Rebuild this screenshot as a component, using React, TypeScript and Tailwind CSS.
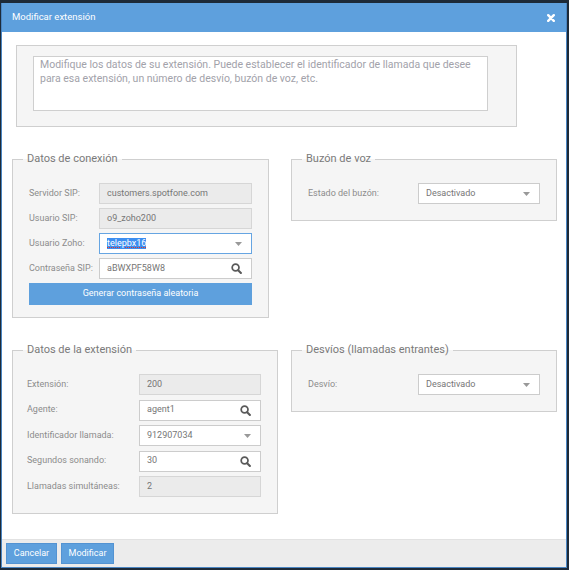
import React from 'react';

type Kind = 'readonly' | 'select' | 'search' | 'focus' | 'text';

// Small grey triangle used by the select boxes
const Caret = () => (
  <svg width="7" height="4" viewBox="0 0 7 4" className="shrink-0">
    <path d="M0 0h7L3.5 4z" fill="#999999" />
  </svg>
);

// Magnifier like the font-awesome one in the original form
const SearchIcon = () => (
  <svg width="11" height="11" viewBox="0 0 12 12" className="shrink-0">
    <circle cx="5" cy="5" r="3.7" fill="none" stroke="#5a5a5a" strokeWidth="1.9" />
    <path d="M7.8 7.8L10.8 10.8" stroke="#5a5a5a" strokeWidth="2.3" strokeLinecap="round" />
  </svg>
);

const CloseIcon = () => (
  <svg width="8" height="8" viewBox="0 0 8 8">
    <path d="M1.2 1.2L6.8 6.8M6.8 1.2L1.2 6.8" stroke="#fff" strokeWidth="2.4" strokeLinecap="round" />
  </svg>
);

const Input = ({ value, kind, width }: { value: string; kind: Kind; width: string }) => {
  let box = 'bg-white border-[#cccccc]';
  if (kind === 'readonly') box = 'bg-[#ebebeb] border-[#d6d6d6]';
  if (kind === 'focus') box = 'bg-white border-[#66a5e2]';

  return (
    <div className={`flex items-center justify-between h-[21px] border pl-[7px] pr-[9px] ${box} ${width}`}>
      {kind === 'focus' ? (
        <span className="bg-[#3d8ef0] text-white leading-[11px] underline decoration-dotted decoration-[#e0342c] underline-offset-[1px]">
          {value}
        </span>
      ) : (
        <span className="text-[#767676]">{value}</span>
      )}
      {(kind === 'select' || kind === 'focus') && <Caret />}
      {kind === 'search' && <SearchIcon />}
    </div>
  );
};

const Row = ({ label, labelWidth, children }: { label: string; labelWidth: string; children: React.ReactNode }) => (
  <div className="flex items-center">
    <span className={`text-[#8c8c8c] shrink-0 ${labelWidth}`}>{label}</span>
    {children}
  </div>
);

const Group = ({ title, width, children }: { title: string; width: string; children: React.ReactNode }) => (
  <fieldset className={`border border-[#cfcfcf] bg-[#f5f5f5] ${width}`}>
    <legend className="ml-[10px] px-[4px] text-[11px] leading-[14px] text-[#7a7a7a]">{title}</legend>
    {children}
  </fieldset>
);

export default function App() {
  return (
    <div className="w-[569px] h-[570px] bg-[#1d2a38] pt-[3px] pl-[1px] font-['Roboto',sans-serif] text-[9px]">
      <div className="w-[566px] h-[565px] bg-white border-x border-b border-[#4a85c2] flex flex-col">
        {/* header */}
        <div className="h-[29px] bg-[#5ea0dd] flex items-center justify-between pl-[10px] pr-[11px]">
          <span className="text-white text-[9.5px]">Modificar extensión</span>
          <CloseIcon />
        </div>

        {/* intro */}
        <div className="ml-[14px] mt-[13px] w-[501px] h-[82px] border border-[#cfcfcf] bg-[#f5f5f5] pt-[10px] pl-[16px]">
          <div className="w-[455px] h-[55px] bg-white border border-[#cfcfcf] pl-[6px] pt-[1px] text-[10.5px] leading-[14px] text-[#a2a2aa]">
            Modifique los datos de su extensión. Puede establecer el identificador de llamada que desee
            <br />
            para esa extensión, un número de desvío, buzón de voz, etc.
          </div>
        </div>

        {/* first row */}
        <div className="grid grid-cols-[279px_266px] pl-[10px] mt-[25px] items-start">
          <Group title="Datos de conexión" width="w-[256px]">
            <div className="flex flex-col gap-[4px] pt-[17px] px-[16px] pb-[12px]">
              <Row label="Servidor SIP:" labelWidth="w-[70px]">
                <Input value="customers.spotfone.com" kind="readonly" width="w-[153px]" />
              </Row>
              <Row label="Usuario SIP:" labelWidth="w-[70px]">
                <Input value="o9_zoho200" kind="readonly" width="w-[153px]" />
              </Row>
              <Row label="Usuario Zoho:" labelWidth="w-[70px]">
                <Input value="telepbx16" kind="focus" width="w-[153px]" />
              </Row>
              <Row label="Contraseña SIP:" labelWidth="w-[70px]">
                <Input value="aBWXPF58W8" kind="search" width="w-[153px]" />
              </Row>
              <button className="h-[22px] w-[223px] bg-[#5ea0dd] text-white text-[9px]">
                Generar contraseña aleatoria
              </button>
            </div>
          </Group>

          <Group title="Buzón de voz" width="w-[266px]">
            <div className="pt-[17px] pl-[16px] pb-[16px]">
              <Row label="Estado del buzón:" labelWidth="w-[110px]">
                <Input value="Desactivado" kind="select" width="w-[122px]" />
              </Row>
            </div>
          </Group>
        </div>

        {/* second row */}
        <div className="grid grid-cols-[279px_266px] pl-[10px] mt-[25px] items-start">
          <Group title="Datos de la extensión" width="w-[266px]">
            <div className="flex flex-col gap-[4.5px] pt-[17px] pl-[14px] pb-[16px]">
              <Row label="Extensión:" labelWidth="w-[112px]">
                <Input value="200" kind="readonly" width="w-[122px]" />
              </Row>
              <Row label="Agente:" labelWidth="w-[112px]">
                <Input value="agent1" kind="search" width="w-[122px]" />
              </Row>
              <Row label="Identificador llamada:" labelWidth="w-[112px]">
                <Input value="912907034" kind="select" width="w-[122px]" />
              </Row>
              <Row label="Segundos sonando:" labelWidth="w-[112px]">
                <Input value="30" kind="search" width="w-[122px]" />
              </Row>
              <Row label="Llamadas simultáneas:" labelWidth="w-[112px]">
                <Input value="2" kind="readonly" width="w-[122px]" />
              </Row>
            </div>
          </Group>

          <Group title="Desvíos (llamadas entrantes)" width="w-[266px]">
            <div className="pt-[17px] pl-[16px] pb-[16px]">
              <Row label="Desvío:" labelWidth="w-[110px]">
                <Input value="Desactivado" kind="select" width="w-[122px]" />
              </Row>
            </div>
          </Group>
        </div>

        {/* footer */}
        <div className="mt-auto h-[28px] bg-[#ececec] border-t border-[#e2e2e2] flex items-start gap-[4px] pt-[3px] pl-[4px]">
          <button className="h-[21px] w-[51px] bg-[#5ea0dd] border border-[#5393d2] text-white text-[9px]">Cancelar</button>
          <button className="h-[21px] w-[53px] bg-[#5ea0dd] border border-[#5393d2] text-white text-[9px]">Modificar</button>
        </div>
      </div>
    </div>
  );
}
